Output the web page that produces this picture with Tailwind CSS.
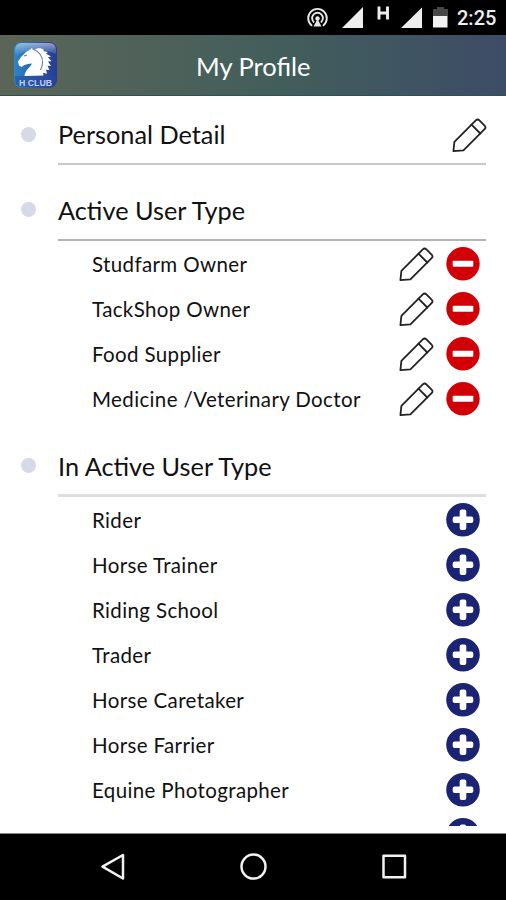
<!DOCTYPE html>
<html lang="en">
<head>
<meta charset="utf-8">
<title>My Profile</title>
<script src="https://cdn.jsdelivr.net/npm/@tailwindcss/browser@4"></script>
</head>
<body class="w-[506px] h-[900px] overflow-hidden bg-white text-[#111] font-['Lato',sans-serif] flex flex-col">
<svg class="hidden">
  <symbol id="pencil" viewBox="0 0 36 36"><g fill="none" stroke="#222" stroke-width="1.8" stroke-linejoin="round" stroke-linecap="round"><path d="M2.400 34.200 3.400 24.800 24.800 3.400Q26.600 1.600 28.400 3.400L33.600 8.600Q35.400 10.400 33.600 12.200L12.400 33.400Z"/><path d="M20.500 7.700 29.300 16.500"/></g></symbol>
  <symbol id="minus" viewBox="0 0 34 34"><circle cx="17" cy="16.700" r="16.700" fill="#d10006"/><rect x="6.700" y="13.700" width="20.600" height="6" rx=".8" fill="#fff"/></symbol>
  <symbol id="plus" viewBox="0 0 34 34"><circle cx="17" cy="16.800" r="16.800" fill="#1b2373"/><rect x="13.700" y="6.500" width="6.600" height="20.500" rx="2" fill="#fff"/><rect x="6.700" y="13.500" width="20.600" height="6.600" rx="2" fill="#fff"/></symbol>
</svg>

<div class="h-[35px] shrink-0 bg-black flex items-center justify-end pr-[10px]">
  <svg class="w-[144px] h-[35px] shrink-0" viewBox="306 0 144 35">
    <g fill="none" stroke="#e8e8e8" stroke-width="1.900" stroke-linecap="round"><path d="M311.500 25.300a9.300 9.300 0 1 1 12 0"/><path d="M313.600 21.900a5.400 5.400 0 1 1 7.800 0"/></g>
    <circle cx="317.500" cy="18.500" r="2.200" fill="#e8e8e8"/><path d="M317.500 19l4 7.500h-8z" fill="#e8e8e8"/>
    <path d="M342 28 363 7v21zM401 28 422 7.500V28z" fill="#eee"/>
    <path d="M379 6.500v13M387.500 6.500v13M379 13H388" stroke="#eee" stroke-width="2.900"/>
    <path d="M433 9h4V7h7v2h4v7h-15z" fill="#484848"/><path d="M433 16h14.500v11.500h-14.500z" fill="#f2f2f2"/>
  </svg>
  <div class="w-[46px] pl-[7px] text-[20px] leading-[35px] pt-[1px] font-medium text-[#eee] font-['Roboto',sans-serif] whitespace-nowrap">2:25</div>
</div>

<header class="h-[61px] shrink-0 bg-linear-to-r from-[#5b6557] via-[#425e5b] via-55% to-[#3d4c66] border-b border-[#2c5158] flex items-center">
  <svg class="ml-[13px] mb-[1px] w-[45px] h-[48px]" viewBox="0 0 45 48">
    <defs><linearGradient id="blue" x1="0" x2="1"><stop offset="0" stop-color="#2b86c6"/><stop offset=".6" stop-color="#2c55a6"/><stop offset="1" stop-color="#273b91"/></linearGradient>
    <linearGradient id="gloss" x1="0" x2="0" y1="0" y2="1"><stop offset="0" stop-color="#fff" stop-opacity=".5"/><stop offset="1" stop-color="#fff" stop-opacity="0"/></linearGradient></defs>
    <rect x="1" y="1" width="43" height="46" rx="8" fill="url(#blue)"/>
    <path d="M2 15V9q0-7 7-7h27q7 0 7 7v4q-20-9-41 2z" fill="url(#gloss)"/>
    <path d="M2 35h41v4q0 7-8 7H10q-8 0-8-7z" fill="#2648a0" opacity=".55"/>
    <path d="M11.500 35C12 29 17 27 19 22.500c-3 .5-5 .5-7.500 1.500L8.500 26 6 24.500 5 20.500l3.500-5L13 11l3.500-2L19 7l1 2 4-1.500c3-.5 5 0 7 1.500l-1 1 5 1-2 1.500 5 3-3 .8 3.500 4-3.500.2 3 4.500-3.500-.2 2 4.200-3.500-.2 1 4-4-1 .5 2.700z" fill="#fff"/>
    <path d="M20 8c7 3 10 8 9.500 14 0 3-1 5-2 7M11 15l3-1" stroke="#6c779b" stroke-width="1.100" fill="none"/>
    <text x="22.500" y="44.500" text-anchor="middle" textLength="33" lengthAdjust="spacingAndGlyphs" font-family="Liberation Sans, sans-serif" font-weight="bold" font-size="8.500" fill="#c3cdec">H CLUB</text>
  </svg>
  <h1 class="ml-[138px] mt-[1px] text-[25.5px] leading-[30px] text-white whitespace-nowrap">My Profile</h1>
</header>

<main class="h-[730px] shrink-0 overflow-hidden pr-5">
  <section>
    <div class="h-[67px] ml-[58px] pt-[9px] border-b-2 border-[#c9c9c9] mt-[2px] flex items-center justify-between relative">
      <i class="absolute left-[-37px] top-[29px] size-[15px] rounded-full bg-[#d6d9e6]"></i>
      <h2 class="mb-[2px] text-[25.3px] leading-[30px] whitespace-nowrap">Personal Detail</h2>
      <svg class="w-[36px] h-[36px] mr-[-1px]"><use href="#pencil"/></svg>
    </div>
  </section>
  <section>
    <div class="h-[76px] ml-[58px] pt-[15px] border-b-2 border-[#b5b5b5] flex items-center relative">
      <i class="absolute left-[-37px] top-[37px] size-[15px] rounded-full bg-[#d6d9e6]"></i>
      <h2 class="text-[25.3px] leading-[30px] whitespace-nowrap">Active User Type</h2>
    </div>
    <ul class="pl-[92px] pr-[6px] text-[20.5px] leading-[30px] tracking-[0.37px] whitespace-nowrap">
      <li class="h-[45px] flex items-center"><span class="flex-1">Studfarm Owner</span><svg class="size-[36px] mr-[12px]"><use href="#pencil"/></svg><svg class="size-[34px]"><use href="#minus"/></svg></li>
      <li class="h-[45px] flex items-center"><span class="flex-1">TackShop Owner</span><svg class="size-[36px] mr-[12px]"><use href="#pencil"/></svg><svg class="size-[34px]"><use href="#minus"/></svg></li>
      <li class="h-[45px] flex items-center"><span class="flex-1">Food Supplier</span><svg class="size-[36px] mr-[12px]"><use href="#pencil"/></svg><svg class="size-[34px]"><use href="#minus"/></svg></li>
      <li class="h-[45px] flex items-center"><span class="flex-1">Medicine /Veterinary Doctor</span><svg class="size-[36px] mr-[12px]"><use href="#pencil"/></svg><svg class="size-[34px]"><use href="#minus"/></svg></li>
    </ul>
  </section>
  <section>
    <div class="h-[76px] ml-[58px] pt-[17px] border-b-3 border-[#dedede] flex items-center relative">
      <i class="absolute left-[-37px] top-[37px] size-[15px] rounded-full bg-[#d6d9e6]"></i>
      <h2 class="text-[25.3px] leading-[30px] whitespace-nowrap">In Active User Type</h2>
    </div>
    <ul class="h-[329px] overflow-hidden pl-[92px] pr-[6px] text-[20.5px] leading-[30px] tracking-[0.37px] whitespace-nowrap">
      <li class="h-[45px] flex items-center"><span class="flex-1">Rider</span><svg class="size-[34px]"><use href="#plus"/></svg></li>
      <li class="h-[45px] flex items-center"><span class="flex-1">Horse Trainer</span><svg class="size-[34px]"><use href="#plus"/></svg></li>
      <li class="h-[45px] flex items-center"><span class="flex-1">Riding School</span><svg class="size-[34px]"><use href="#plus"/></svg></li>
      <li class="h-[45px] flex items-center"><span class="flex-1">Trader</span><svg class="size-[34px]"><use href="#plus"/></svg></li>
      <li class="h-[45px] flex items-center"><span class="flex-1">Horse Caretaker</span><svg class="size-[34px]"><use href="#plus"/></svg></li>
      <li class="h-[45px] flex items-center"><span class="flex-1">Horse Farrier</span><svg class="size-[34px]"><use href="#plus"/></svg></li>
      <li class="h-[45px] flex items-center"><span class="flex-1">Equine Photographer</span><svg class="size-[34px]"><use href="#plus"/></svg></li>
      <li class="h-[45px] flex items-center"><span class="flex-1"></span><svg class="size-[34px]"><use href="#plus"/></svg></li>
    </ul>
  </section>
</main>

<nav class="h-[74px] flex-1 bg-black border-t-[7px] border-white">
  <svg class="w-[506px] h-[67px] border-t border-[#888]" viewBox="0 834 506 66" fill="none" stroke="#f2f2f2" stroke-width="2.500" stroke-linejoin="round">
    <path d="M102.500 866.700 123 855v23.500z"/><circle cx="253.500" cy="866.600" r="12"/><rect x="383.500" y="855.800" width="21.500" height="21.500"/>
  </svg>
</nav>
</body>
</html>
